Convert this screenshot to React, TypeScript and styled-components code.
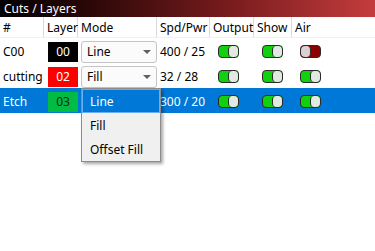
import React from "react";
import styled, { createGlobalStyle } from "styled-components";

const GlobalStyle = createGlobalStyle`
    html, body {
        margin: 0;
        padding: 0;
        background: #ffffff;
    }
    body {
        font-family: "Noto Sans", "Open Sans", "Liberation Sans", sans-serif;
        font-size: 12px;
        color: #000;
    }
`;

const COLS = "44px 34px 79px 53px 44px 38px 1fr";

const Panel = styled.div`
    width: 375px;
    height: 251px;
    background: #ffffff;
    overflow: hidden;
    position: relative;
`;

const TitleBar = styled.div`
    height: 17px;
    display: flex;
    align-items: center;
    padding-left: 4px;
    color: #ffffff;
    font-size: 12px;
    background: linear-gradient(90deg, #000000 0%, #2e0808 25%, #7a1c1e 62%, #c43c3d 100%);
`;

const HeaderRow = styled.div`
    display: grid;
    grid-template-columns: ${COLS};
    height: 20px;
    border-bottom: 1px solid #f0f0f0;
`;

const HeaderCell = styled.div`
    display: flex;
    align-items: center;
    padding-left: 3px;
    border-right: 1px solid #d9d9d9;
    &:last-child {
        border-right: none;
    }
`;

const Row = styled.div<{ $selected?: boolean }>`
    display: grid;
    grid-template-columns: ${COLS};
    height: 25px;
    align-items: center;
    background: ${(p) => (p.$selected ? "#0078d7" : "transparent")};
    color: ${(p) => (p.$selected ? "#ffffff" : "#000000")};
`;

const Cell = styled.div`
    display: flex;
    align-items: center;
    padding-left: 3px;
    padding-top: 2px;
    box-sizing: border-box;
    height: 100%;
    position: relative;
`;

const Swatch = styled.div<{ $bg: string; $fg: string }>`
    width: 30px;
    height: 20px;
    margin-left: 1px;
    background: ${(p) => p.$bg};
    color: ${(p) => p.$fg};
    display: flex;
    align-items: center;
    justify-content: center;
`;

const Combo = styled.div`
    box-sizing: border-box;
    width: 77px;
    height: 22px;
    border: 1px solid #c4c4c4;
    border-radius: 3px;
    background: #fbfbfb;
    display: flex;
    align-items: center;
    justify-content: space-between;
    padding: 0 5px 0 5px;
    color: #000;
`;

const Arrow = styled.span`
    width: 0;
    height: 0;
    border-left: 4px solid transparent;
    border-right: 4px solid transparent;
    border-top: 4px solid #606060;
`;

const Popup = styled.div`
    position: absolute;
    top: 0;
    left: 3px;
    width: 80px;
    box-sizing: border-box;
    border: 1px solid #8c8c8c;
    background: #f0f0f0;
    box-shadow: 2px 2px 3px rgba(0, 0, 0, 0.35);
    z-index: 2;
`;

const PopupItem = styled.div<{ $active?: boolean }>`
    height: 24px;
    box-sizing: border-box;
    display: flex;
    align-items: center;
    padding-left: 7px;
    background: ${(p) => (p.$active ? "#0078d7" : "transparent")};
    color: ${(p) => (p.$active ? "#ffffff" : "#000000")};
    border: 1px solid ${(p) => (p.$active ? "#66aef0" : "transparent")};
`;

const Toggle = styled.div<{ $on: boolean }>`
    box-sizing: border-box;
    width: 21px;
    height: 13px;
    margin-left: 5px;
    border: 1px solid #2a2a2a;
    border-radius: 4px;
    display: flex;
    overflow: hidden;
    background: ${(p) => (p.$on ? "#10d010" : "#8e0000")};
`;

const Knob = styled.div<{ $on: boolean }>`
    width: 10px;
    height: 100%;
    box-sizing: border-box;
    border-left: ${(p) => (p.$on ? "1px solid #2a2a2a" : "none")};
    border-right: ${(p) => (p.$on ? "none" : "1px solid #2a2a2a")};
    border-radius: 4px;
    background: ${(p) => (p.$on ? "#e2e8e2" : "#dccfcf")};
    margin-left: ${(p) => (p.$on ? "auto" : "0")};
`;

function Switch({ on }: { on: boolean }) {
    return (
        <Toggle $on={on}>
            <Knob $on={on} />
        </Toggle>
    );
}

interface Layer {
    name: string;
    layer: string;
    bg: string;
    fg: string;
    mode: string;
    spd: string;
    output: boolean;
    show: boolean;
    air: boolean;
}

const layers: Layer[] = [
    { name: "C00", layer: "00", bg: "#000000", fg: "#ffffff", mode: "Line", spd: "400 / 25", output: true, show: true, air: false },
    { name: "cutting", layer: "02", bg: "#ff0000", fg: "#ffffff", mode: "Fill", spd: "32 / 28", output: true, show: true, air: true },
    { name: "Etch", layer: "03", bg: "#00bb44", fg: "#0c2c14", mode: "Line", spd: "300 / 20", output: true, show: true, air: true },
];

export default function App() {
    return (
        <Panel>
            <GlobalStyle />
            <TitleBar>Cuts / Layers</TitleBar>
            <HeaderRow>
                <HeaderCell>#</HeaderCell>
                <HeaderCell>Layer</HeaderCell>
                <HeaderCell>Mode</HeaderCell>
                <HeaderCell>Spd/Pwr</HeaderCell>
                <HeaderCell>Output</HeaderCell>
                <HeaderCell>Show</HeaderCell>
                <HeaderCell>Air</HeaderCell>
            </HeaderRow>
            {layers.map((l, i) => {
                const selected = i === 2;
                return (
                    <Row key={l.name} $selected={selected}>
                        <Cell>{l.name}</Cell>
                        <Cell>
                            <Swatch $bg={l.bg} $fg={l.fg}>
                                {l.layer}
                            </Swatch>
                        </Cell>
                        <Cell>
                            {selected ? (
                                <Popup>
                                    <PopupItem $active>Line</PopupItem>
                                    <PopupItem>Fill</PopupItem>
                                    <PopupItem>Offset Fill</PopupItem>
                                </Popup>
                            ) : (
                                <Combo>
                                    {l.mode}
                                    <Arrow />
                                </Combo>
                            )}
                        </Cell>
                        <Cell>{l.spd}</Cell>
                        <Cell>
                            <Switch on={l.output} />
                        </Cell>
                        <Cell>
                            <Switch on={l.show} />
                        </Cell>
                        <Cell>
                            <Switch on={l.air} />
                        </Cell>
                    </Row>
                );
            })}
        </Panel>
    );
}
